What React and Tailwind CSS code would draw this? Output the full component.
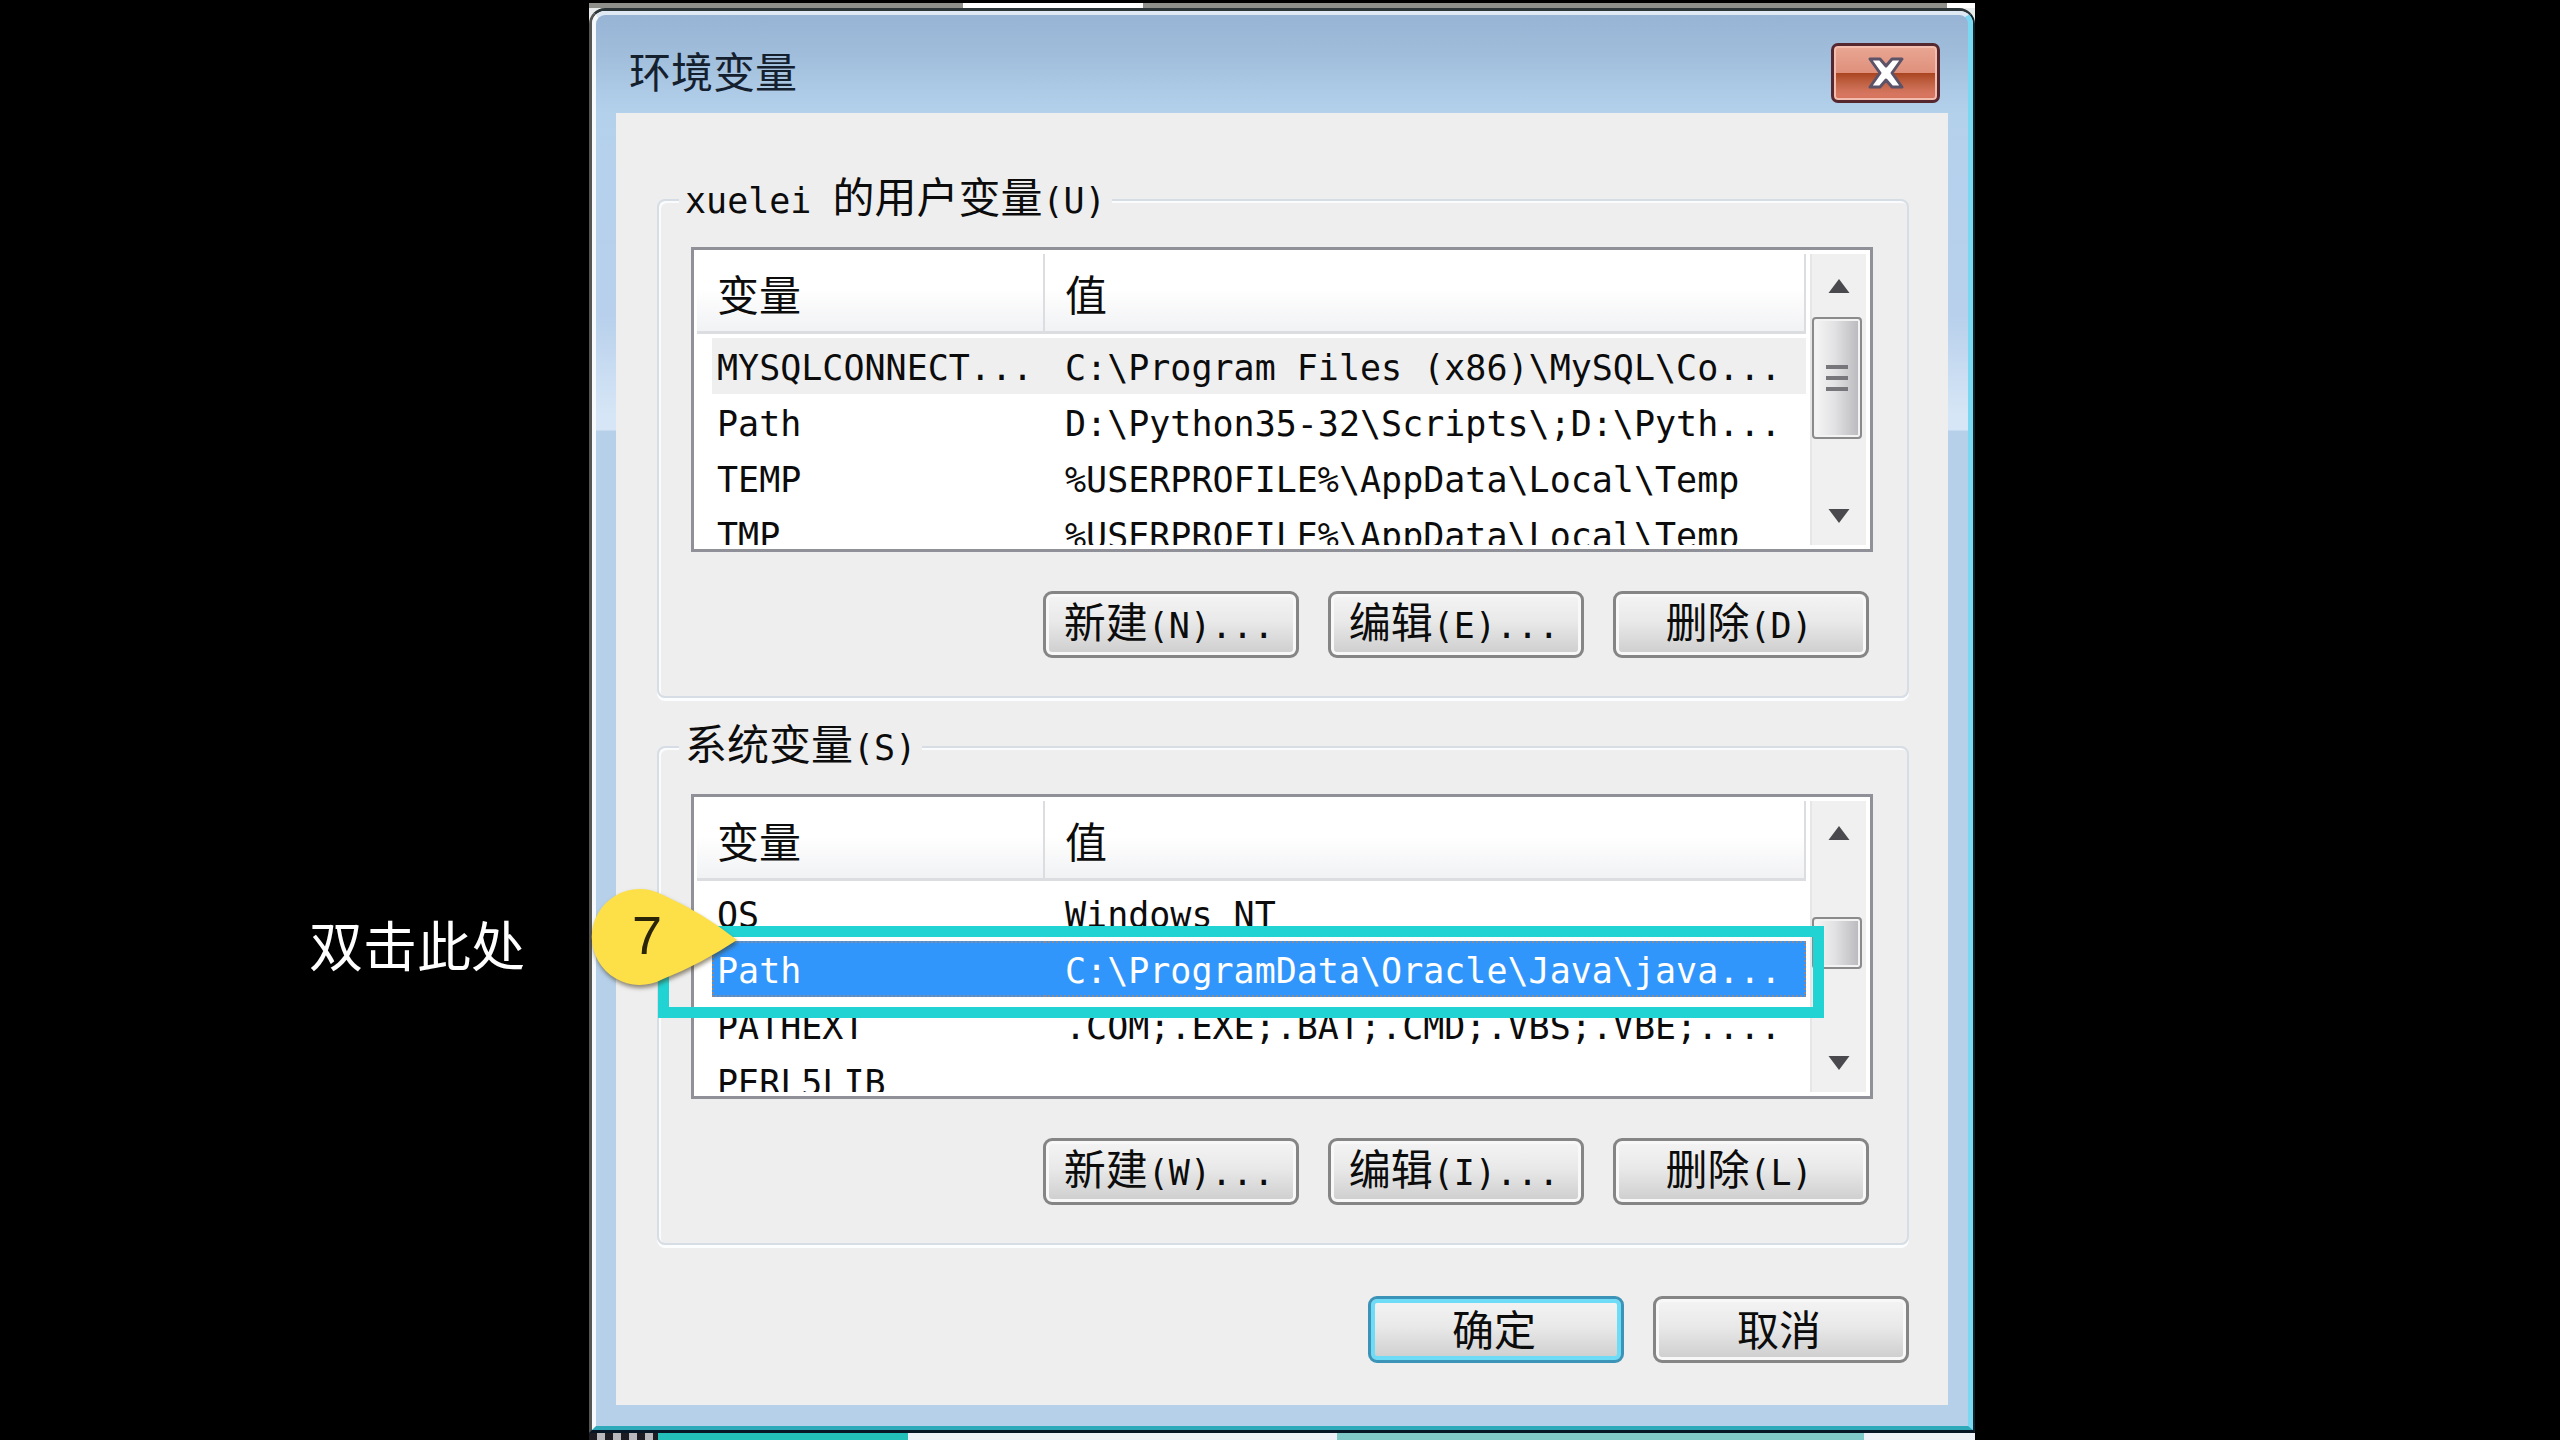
import clsx from 'clsx';

const userVars = [
  { name: 'MYSQLCONNECT...', value: 'C:\\Program Files (x86)\\MySQL\\Co...', hot: true },
  { name: 'Path', value: 'D:\\Python35-32\\Scripts\\;D:\\Pyth...' },
  { name: 'TEMP', value: '%USERPROFILE%\\AppData\\Local\\Temp' },
  { name: 'TMP', value: '%USERPROFILE%\\AppData\\Local\\Temp' },
];

const systemVars = [
  { name: 'OS', value: 'Windows NT' },
  { name: 'Path', value: 'C:\\ProgramData\\Oracle\\Java\\java...', selected: true },
  { name: 'PATHEXT', value: '.COM;.EXE;.BAT;.CMD;.VBS;.VBE;....' },
  { name: 'PERL5LIB', value: '' },
];

function Cjk({ children }) {
  return <span className="font-['Noto_Sans_CJK_SC',sans-serif] text-[42px]">{children}</span>;
}

function DialogButton({ children, primary }) {
  return (
    <button
      type="button"
      className={clsx(
        'flex h-[67px] w-64 items-center justify-center whitespace-nowrap rounded-[9px] border-[3px] bg-linear-to-b from-[#f4f4f4] from-0% via-[#e9e9e9] via-45% to-[#cdcdcd] pr-1 pb-1 leading-[48px]',
        primary
          ? 'border-[#3c93b8] shadow-[inset_0_0_0_4px_#6fdcf7]'
          : 'border-[#858585] shadow-[inset_0_0_0_3px_#f8f8f8]'
      )}
    >
      {children}
    </button>
  );
}

function Scrollbar({ label, spacer, thumb, grip }) {
  return (
    <div className="flex w-14 shrink-0 flex-col border-l-2 border-[#e6e6e6] bg-[#f0f0f0]">
      <button type="button" aria-label={`${label} 向上滚动`} className="flex h-[63px] items-center justify-center">
        <svg className="h-[14px] w-[22px]" viewBox="0 0 24 16">
          <path d="M12 0 24 16H0Z" fill="#4a4a4e" />
        </svg>
      </button>
      <div className="flex-1">
        <div className={spacer} />
        <div
          className={clsx(
            'mr-1 flex flex-col items-center justify-center gap-[7px] rounded-[4px] border-2 border-[#8b8b8b] bg-linear-to-r from-[#f6f6f6] via-[#e2e2e4] via-45% to-[#b9b9bd] shadow-[inset_0_0_0_2px_#f3f3f3]',
            thumb
          )}
        >
          {grip && [0, 1, 2].map((i) => <div key={i} className="h-1 w-[22px] bg-[#77777b]" />)}
        </div>
      </div>
      <button type="button" aria-label={`${label} 向下滚动`} className="flex h-[58px] items-center justify-center">
        <svg className="h-[14px] w-[22px]" viewBox="0 0 24 16">
          <path d="M0 0H24L12 16Z" fill="#4a4a4e" />
        </svg>
      </button>
    </div>
  );
}

function VariableList({ label, rows, ...scroll }) {
  return (
    <div className="flex gap-1 border-[3px] border-[#8f9098] bg-white py-1 pr-1 pl-[3px]">
      <div className="h-[291px] min-w-0 flex-1 overflow-hidden">
        <table aria-label={label} className="w-full table-fixed border-collapse text-left">
          <thead>
            <tr>
              <th className="w-[348px] p-0 pb-1 font-normal">
                <div className="flex h-20 items-center border-r-2 border-b-[3px] border-[#dcdde0] bg-linear-to-b from-white from-45% to-[#f1f2f4] pl-5 leading-[48px]">
                  <Cjk>变量</Cjk>
                </div>
              </th>
              <th className="p-0 pb-1 font-normal">
                <div className="flex h-20 items-center border-r-2 border-b-[3px] border-[#dcdde0] bg-linear-to-b from-white from-45% to-[#f1f2f4] pl-5 leading-[48px]">
                  <Cjk>值</Cjk>
                </div>
              </th>
            </tr>
          </thead>
          <tbody>
            {rows.map((row) => {
              const fill = clsx(
                'h-14 whitespace-pre leading-[52px]',
                row.hot && 'bg-[#efeff0]',
                row.selected ? 'border-y-2 border-dotted border-[#8c8a91] bg-[#3096fc] pt-[2px] text-white' : 'pt-1'
              );
              return (
                <tr key={row.name}>
                  <td className="p-0 pl-[15px]">
                    <div className={clsx(fill, row.selected ? 'border-l-2 pl-[3px]' : 'pl-[5px]')}>{row.name}</div>
                  </td>
                  <td className="p-0">
                    <div className={clsx(fill, 'pl-5', row.selected && 'border-r-2')}>{row.value}</div>
                  </td>
                </tr>
              );
            })}
          </tbody>
        </table>
      </div>
      <Scrollbar label={label} {...scroll} />
    </div>
  );
}

// numbered pin + frame around the row to double-click
function Callout() {
  return (
    <>
      <div className="pointer-events-none absolute top-[132px] right-[49px] -left-[33px] h-[92px] border-[11px] border-[#22d3d3]" />
      <div className="pointer-events-none absolute top-[95px] -left-[100px] h-[98px] w-[148px]">
        <svg className="h-full w-full overflow-visible drop-shadow-[1px_3px_2px_rgba(60,50,20,0.55)]" viewBox="0 0 148 98">
          <path d="M146 51Q110 75 72 90A48 48 0 1 1 72 6Q112 24 146 51Z" fill="#fde047" />
        </svg>
        <span className="absolute top-0 left-[41px] font-['Liberation_Sans',sans-serif] text-[54px] leading-[92px] text-[#2b2508]">7</span>
      </div>
    </>
  );
}

function Group({ legend, buttons, children }) {
  return (
    <fieldset className="min-w-0 rounded-[8px] border-2 border-[#d6dde5] px-5 pb-[38px] shadow-[inset_2px_2px_0_#fafbfc,0_3px_0_#fcfdfe]">
      <legend className="bg-[#eeeeef] px-[6px]">
        <span className="flex h-12 items-baseline whitespace-pre leading-[38px]">{legend}</span>
      </legend>
      <div className="relative mt-[23px] mr-[14px] ml-3">{children}</div>
      <div className="mt-[39px] mr-[18px] flex justify-end gap-[29px]">{buttons}</div>
    </fieldset>
  );
}

function TitleBar() {
  return (
    <header className="flex h-[98px] items-center justify-between pt-[17px] pr-2 pl-[13px]">
      <h1 className="leading-[48px] text-[#14202e]"><Cjk>环境变量</Cjk></h1>
      <button
        type="button"
        aria-label="关闭"
        className="flex h-[60px] w-[109px] items-center justify-center rounded-[7px] border-[3px] border-[#55272f] bg-linear-to-b from-[#e9a794] from-0% via-[#df917c] via-48% to-[#d5705a] shadow-[inset_0_0_0_2px_#f2bcae]"
      >
        <span className="flex h-full w-full items-center justify-center bg-linear-to-b from-transparent from-50% via-[#a9431e] via-50% to-transparent to-90% bg-clip-content px-[2px]">
          <svg className="h-8 w-[38px]" viewBox="0 0 38 32">
            <path
              d="M3 2H13L19 9 25 2H35L25 16 35 30H25L19 23 13 30H3L13 16Z"
              fill="#fff"
              stroke="#5c5368"
              strokeWidth="3"
              strokeLinejoin="round"
            />
          </svg>
        </span>
      </button>
    </header>
  );
}

export default function App() {
  return (
    <main className="grid min-h-screen grid-cols-[589fr_1386fr_585fr] overflow-hidden bg-black font-['DejaVu_Sans_Mono','Noto_Sans_CJK_SC',monospace] text-[35px] text-[#0c0c0c]">
      <aside className="flex justify-end pt-[917px] pr-16">
        <p className="font-['Noto_Sans_CJK_SC',sans-serif] text-[54px] leading-[54px] whitespace-nowrap text-white">双击此处</p>
      </aside>

      <section className="flex min-w-0 flex-col pt-[3px]">
        <div className="flex h-[5px] bg-[#8e8e8a]">
          <div className="w-[27%]" />
          <div className="w-[13%] bg-white" />
          <div className="ml-auto w-[2%] bg-white" />
        </div>

        <div className="bg-[#e8ecec]">
          <div className="rounded-t-[16px] border-t-[3px] border-r-2 border-b-[3px] border-l-[3px] border-t-[#2b3436] border-r-[#10222a] border-b-[#071725] border-l-[#555553] bg-white">
            <div className="rounded-t-[13px] border-t-4 border-r-[5px] border-b-4 border-l-4 border-t-[#dfe9f4] border-r-[#7ad8f3] border-b-[#2ea9ba] border-l-[#f6fafd] bg-[linear-gradient(to_bottom,#98b4d5_0px,#a0bddb_40px,#b4d1ec_98px,#b8d0ec_300px,#d6e6f6_400px,#d6e6f6_415px,#b6d0ea_416px)] px-5 pb-[21px]">
              <TitleBar />
              <div className="bg-[#eeeeef] pt-[63px] pr-[39px] pb-[42px] pl-[41px]">
                <div className="flex flex-col gap-[25px]">
                  <Group
                    legend={<>{'xuelei '}<Cjk>的用户变量</Cjk>(U)</>}
                    buttons={
                      <>
                        <DialogButton><span><Cjk>新建</Cjk>(N)...</span></DialogButton>
                        <DialogButton><span><Cjk>编辑</Cjk>(E)...</span></DialogButton>
                        <DialogButton><span><Cjk>删除</Cjk>(D)</span></DialogButton>
                      </>
                    }
                  >
                    <VariableList label="用户变量" rows={userVars} spacer="h-0" thumb="h-[122px]" grip />
                  </Group>

                  <Group
                    legend={<><Cjk>系统变量</Cjk>(S)</>}
                    buttons={
                      <>
                        <DialogButton><span><Cjk>新建</Cjk>(W)...</span></DialogButton>
                        <DialogButton><span><Cjk>编辑</Cjk>(I)...</span></DialogButton>
                        <DialogButton><span><Cjk>删除</Cjk>(L)</span></DialogButton>
                      </>
                    }
                  >
                    <VariableList label="系统变量" rows={systemVars} spacer="h-[53px]" thumb="h-[52px]" />
                    <Callout />
                  </Group>
                </div>

                <div className="mt-[51px] flex justify-end gap-[29px]">
                  <DialogButton primary><Cjk>确定</Cjk></DialogButton>
                  <DialogButton><Cjk>取消</Cjk></DialogButton>
                </div>
              </div>
            </div>
          </div>
        </div>

        {/* sliver of the window behind */}
        <div className="flex h-[7px] bg-[#eef2f8]">
          <div className="w-[5%] bg-[repeating-linear-gradient(to_right,#1c1c22_0px,#1c1c22_8px,#b9b9bd_8px,#b9b9bd_16px)]" />
          <div className="w-[18%] bg-[#23bfb9]" />
          <div className="ml-[31%] w-[38%] bg-[#80c9c9]" />
        </div>
      </section>
    </main>
  );
}
